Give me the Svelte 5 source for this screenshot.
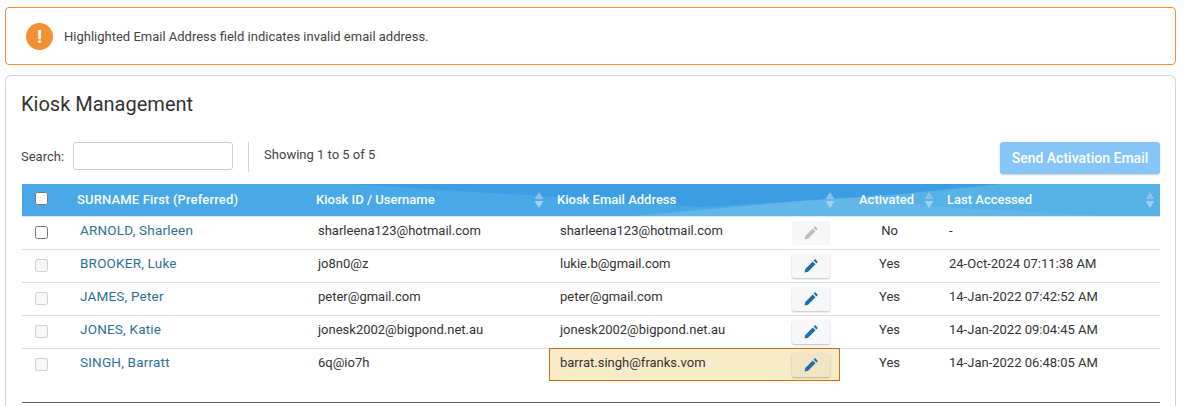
<script>
  const rows = [
    { name: "ARNOLD, Sharleen", user: "sharleena123@hotmail.com", email: "sharleena123@hotmail.com", activated: "No", last: "-", selectable: true },
    { name: "BROOKER, Luke", user: "jo8n0@z", email: "lukie.b@gmail.com", activated: "Yes", last: "24-Oct-2024 07:11:38 AM" },
    { name: "JAMES, Peter", user: "peter@gmail.com", email: "peter@gmail.com", activated: "Yes", last: "14-Jan-2022 07:42:52 AM" },
    { name: "JONES, Katie", user: "jonesk2002@bigpond.net.au", email: "jonesk2002@bigpond.net.au", activated: "Yes", last: "14-Jan-2022 09:04:45 AM" },
    { name: "SINGH, Barratt", user: "6q@io7h", email: "barrat.singh@franks.vom", activated: "Yes", last: "14-Jan-2022 06:48:05 AM", invalid: true }
  ];
</script>

{#snippet sorter()}
  <svg class="sorter" width="10" height="16" viewBox="0 0 10 16"><path d="M5 0l4.5 7H.5z" fill="#8cc0ea" /><path d="M5 16l4.5-7H.5z" fill="#a5d0f1" /></svg>
{/snippet}

<div class="page">
  <div class="alert">
    <span class="alert-icon">!</span>
    <span>Highlighted Email Address field indicates invalid email address.</span>
  </div>

  <div class="card">
    <h1>Kiosk Management</h1>

    <div class="toolbar">
      <label class="search">Search: <input type="text" /></label>
      <span class="divider"></span>
      <span class="showing">Showing 1 to 5 of 5</span>
      <button class="send">Send Activation Email</button>
    </div>

    <div class="table-wrap">
      <!-- header wave, sits behind the transparent thead -->
      <svg class="wave" width="1138" height="32" viewBox="0 0 1138 32" preserveAspectRatio="none">
        <rect width="1138" height="32" fill="#48a9e6" />
        <path d="M978 0H1138V32H1088L908 22 858 12z" fill="#55b1e6" />
        <path d="M328 0C450 8 570 15 678 23L778 17 858 12 978 0z" fill="#3b9ee3" />
        <path d="M611 32L778 17 858 12 908 22 1088 32z" fill="#62b7e8" />
      </svg>
      <table>
        <colgroup>
          <col style="width:47px" /><col style="width:239px" /><col style="width:241px" /><col style="width:291px" /><col style="width:99px" /><col />
        </colgroup>
        <thead>
          <tr>
            <th class="check"><input type="checkbox" /></th>
            <th class="h-name">SURNAME First (Preferred)</th>
            <th>Kiosk ID / Username {@render sorter()}</th>
            <th>Kiosk Email Address {@render sorter()}</th>
            <th class="h-act">Activated {@render sorter()}</th>
            <th>Last Accessed {@render sorter()}</th>
          </tr>
        </thead>
        <tbody>
          {#each rows as row}
            <tr>
              <td class="check"><input type="checkbox" disabled={!row.selectable} /></td>
              <td class="name"><a href="#top">{row.name}</a></td>
              <td>{row.user}</td>
              <td class="email-cell" class:invalid={row.invalid}>
                <div class="email">
                  <span>{row.email}</span>
                  <button class="edit" class:off={row.selectable} aria-label="Edit">
                    <svg width="14" height="14" viewBox="0 0 14 14"><path d="M0.5 13.5l.8-3.6 7.4-7.4 2.8 2.8-7.4 7.4zM9.6 1.6l1-1q.5-.5 1 0l1.8 1.8q.5.5 0 1l-1 1z" fill="currentColor" /></svg>
                  </button>
                </div>
              </td>
              <td class="act">{row.activated}</td>
              <td>{row.last}</td>
            </tr>
          {/each}
        </tbody>
      </table>
    </div>
    <div class="rule"></div>
  </div>
</div>

<style>
  :global(body) {
    margin: 0;
    background: #fff;
    font-family: Roboto, "Liberation Sans", Arial, sans-serif;
    font-size: 13px;
    color: #333;
  }

  .page {
    width: 1184px;
    height: 406px;
    overflow: hidden;
    box-sizing: border-box;
    padding: 7px 8px 0 5px;
  }

  .alert {
    height: 58px;
    box-sizing: border-box;
    border: 1px solid #ee9430;
    border-radius: 4px;
    display: flex;
    align-items: center;
    gap: 11px;
    padding: 0 20px;
    color: #444;
  }

  .alert-icon {
    width: 27px;
    height: 27px;
    border-radius: 50%;
    background: #f09233;
    color: #fff;
    font-weight: 700;
    font-size: 19px;
    display: flex;
    align-items: center;
    justify-content: center;
  }

  .card {
    margin-top: 10px;
    height: 340px;
    border: 1px solid #d5d5d5;
    border-bottom: 0;
    border-radius: 6px 6px 0 0;
    box-sizing: border-box;
    padding: 0 15px 0 16px;
  }

  h1 {
    margin: 0 0 0 -1px;
    padding-top: 16px;
    font-weight: 400;
    font-size: 20px;
    line-height: 24px;
    color: #333;
  }

  .toolbar {
    margin: 26px 0 0 -1px;
    height: 32px;
    display: flex;
    align-items: flex-start;
    color: #444;
  }

  .search {
    display: flex;
    align-items: center;
    gap: 9px;
    height: 28px;
  }

  .search input {
    width: 160px;
    height: 28px;
    box-sizing: border-box;
    border: 1px solid #ccc;
    border-radius: 3px;
    margin: 0;
  }

  .divider {
    width: 1px;
    height: 30px;
    background: #d5d5d5;
    margin: 0 15px;
  }

  .showing {
    line-height: 26px;
  }

  .send {
    margin-left: auto;
    width: 160px;
    height: 32px;
    background: #85c5f8;
    color: #fff;
    border: 0;
    border-radius: 3px;
    box-shadow: 0 1px 2px rgba(0, 0, 0, 0.2);
    font: 500 14px Roboto, sans-serif;
  }

  .table-wrap {
    position: relative;
    margin-top: 10px;
    width: 1138px;
  }

  .wave {
    position: absolute;
    left: 0;
    top: 0;
    display: block;
  }

  table {
    position: relative;
    width: 1138px;
    table-layout: fixed;
    border-collapse: collapse;
  }

  thead tr {
    height: 32px;
    border-bottom: 1px solid #d8e6f0;
  }

  th {
    position: relative;
    padding: 0 8px;
    text-align: left;
    color: #f7fbfe;
    font-weight: 500;
    font-size: 13px;
  }

  .sorter {
    position: absolute;
    right: 5px;
    top: 8px;
  }

  .h-name {
    letter-spacing: 0.15px;
  }

  .h-act {
    padding-left: 19px;
  }

  tbody tr {
    height: 33px;
    border-bottom: 1px solid #ddd;
  }

  tbody tr:last-child {
    border-bottom-color: transparent;
  }

  td {
    padding: 0 10px;
    vertical-align: top;
    line-height: 28px;
    color: #333;
  }

  td.check,
  th.check {
    padding: 0 0 0 13px;
  }

  td.check input {
    margin: 9px 0 0;
    width: 13px;
    height: 13px;
  }

  th.check input {
    margin: 0 0 3px;
    width: 13px;
    height: 13px;
  }

  td.name {
    padding-left: 11px;
    line-height: 26px;
  }

  .name a {
    color: #2c7197;
    text-decoration: none;
    font-size: 13.5px;
    letter-spacing: 0.2px;
  }

  .email-cell {
    padding-left: 11px;
  }

  .email {
    display: flex;
    justify-content: space-between;
  }

  .edit {
    width: 38px;
    height: 24px;
    margin-top: 4px;
    border: 0;
    border-radius: 2px;
    background: #f6f7f8;
    color: #1f6fa8;
    box-shadow: 0 1px 2px rgba(0, 0, 0, 0.25);
    display: flex;
    align-items: center;
    justify-content: center;
    padding: 0;
  }

  .edit.off {
    color: #bdbdbd;
    box-shadow: none;
  }

  .invalid {
    background: #faebc8;
    outline: 1px solid #c46f1c;
    outline-offset: -1px;
  }

  .invalid .edit {
    background: #f2e5c4;
  }

  .act {
    text-align: center;
  }

  .rule {
    margin-top: 20px;
    height: 1px;
    background: #666;
    width: 1138px;
  }
</style>
